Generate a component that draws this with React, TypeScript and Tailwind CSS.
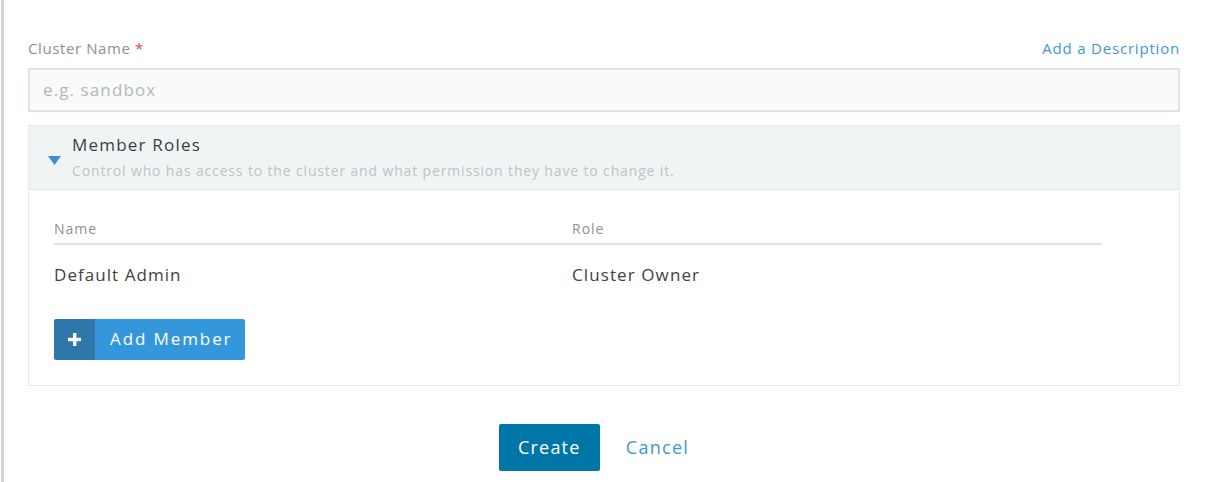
import React from "react";

export default function App() {
  return (
    <div
      className="w-[1205px] h-[482px] bg-white flex overflow-hidden"
      style={{ fontFamily: '"Open Sans", "Liberation Sans", sans-serif' }}
    >
      <div className="w-[3px] ml-[1px] bg-[#d4d4d4] shrink-0" />
      <div className="flex-1 pl-[24px] pr-[25px] pt-[37px] flex flex-col">
        <div className="flex justify-between items-center h-[22px]">
          <label className="text-[15px] text-[#8a9097] tracking-[0.6px]">
            Cluster Name <span className="text-[#e0484b]">*</span>
          </label>
          <a className="text-[15px] text-[#3d98d3] tracking-[0.8px]">Add a Description</a>
        </div>
        <div className="mt-[9px] h-[44px] border-2 border-[#dfe3e6] bg-[#f9fafa] flex items-center pl-[13px]">
          <span className="text-[17px] text-[#b4b8bb] tracking-[1.1px]">e.g. sandbox</span>
        </div>
        <div className="mt-[13px] border border-[#e6e9eb]">
          <div className="h-[64px] bg-[#f1f4f5] border-b border-[#e3e7e9] flex items-center pl-[19px]">
            <svg width="13" height="9" viewBox="0 0 13 9" className="mt-[5px]">
              <polygon points="0,0 13,0 6.5,9" fill="#3d8fd1" />
            </svg>
            <div className="ml-[11px] flex flex-col">
              <span className="text-[17px] leading-[22px] text-[#3b3f42] tracking-[1.2px]">Member Roles</span>
              <span className="text-[14px] leading-[20px] text-[#bfc3c6] mt-[5px] tracking-[0.85px]">
                Control who has access to the cluster and what permission they have to change it.
              </span>
            </div>
          </div>
          <div className="pl-[25px] pr-[77px] pt-[28px] pb-[25px]">
            <div className="grid grid-cols-[518px_1fr] border-b-2 border-[#e2e4e6] pb-[4px]">
              <span className="text-[14px] text-[#8d9296] tracking-[1px]">Name</span>
              <span className="text-[14px] text-[#8d9296] tracking-[1px]">Role</span>
            </div>
            <div className="grid grid-cols-[518px_1fr] mt-[17px]">
              <span className="text-[17px] text-[#3e4245] tracking-[1.05px]">Default Admin</span>
              <span className="text-[17px] text-[#3e4245] tracking-[1.1px]">Cluster Owner</span>
            </div>
            <button className="mt-[31px] h-[41px] flex rounded-[2px] overflow-hidden">
              <span className="w-[41px] h-full bg-[#2f77a9] flex items-center justify-center">
                <svg width="13" height="13" viewBox="0 0 13 13">
                  <rect x="5" y="0" width="3.4" height="13" fill="#fff" />
                  <rect x="0" y="4.8" width="13" height="3.4" fill="#fff" />
                </svg>
              </span>
              <span className="h-full bg-[#3597db] flex items-center pl-[15px] pr-[13px] text-[17px] text-white tracking-[1.9px]">
                Add Member
              </span>
            </button>
          </div>
        </div>
        <div className="flex justify-center items-center mt-[38px] pr-[20px]">
          <button className="w-[101px] h-[47px] bg-[#0075a8] rounded-[2px] text-white text-[18px] tracking-[1.2px]">
            Create
          </button>
          <a className="ml-[26px] text-[18px] text-[#3d98d3] tracking-[1.3px]">Cancel</a>
        </div>
      </div>
    </div>
  );
}
